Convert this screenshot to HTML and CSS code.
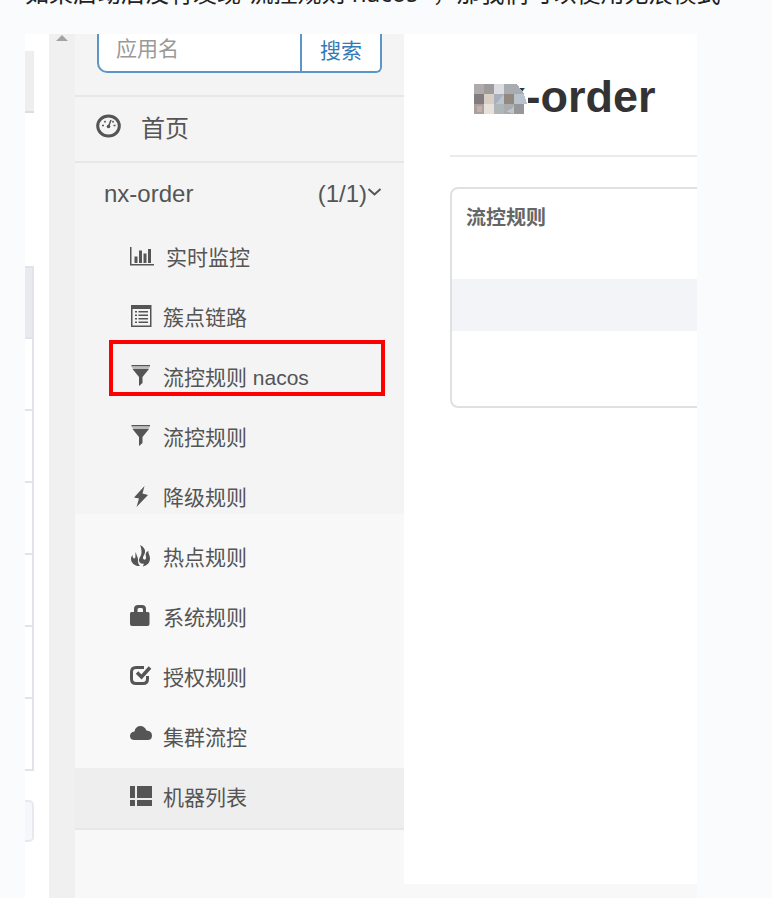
FILE: index.html
```html
<!DOCTYPE html>
<html lang="zh-CN">
<head>
<meta charset="utf-8">
<meta name="viewport" content="width=device-width, initial-scale=1">
<title>nx-order</title>
<link rel="stylesheet" href="styles.css">
</head>
<body>
<article class="article">
  <p class="lead">如果启动后没有发现“流控规则 nacos ”，那我们可以使用无痕模式</p>
  <div class="frame">
    <div class="backdrop" aria-hidden="true">
      <div class="strip-head"></div>
      <div class="strip-table">
        <div class="strip-row strip-row-head"></div>
        <div class="strip-row"></div>
        <div class="strip-row"></div>
        <div class="strip-row"></div>
        <div class="strip-row"></div>
        <div class="strip-row"></div>
        <div class="strip-row"></div>
      </div>
      <div class="strip-button"></div>
    </div>
    <div class="scrollbar" aria-hidden="true">
      <svg width="12" height="6" viewBox="0 0 12 6"><path d="M0 6 6 0l6 6z" fill="#a3a3a3"/></svg>
    </div>
    <nav class="sidebar">
      <div class="sidebar-top">
        <form class="search">
          <input class="search-input" type="text" placeholder="应用名" aria-label="应用名">
          <button class="search-button" type="button">搜索</button>
        </form>
        <a class="home" href="#">
          <svg width="26" height="24" viewBox="0 0 26 24" fill="none" stroke="#555"><ellipse cx="12.500" cy="12" rx="10.800" ry="10" stroke-width="3"/><path d="M12.500 12.500l2.500-6.500" stroke-width="1.500"/><circle cx="12.500" cy="12.500" r="1.800" fill="#555" stroke="none"/><path d="M6 11.500h2M17.500 11.500h2M8.500 7l1 1.500M17.500 7l-1 1.500" stroke-width="1.500"/></svg>
          <span>首页</span>
        </a>
        <a class="app" href="#">
          <span>nx-order</span>
          <span class="app-count">(1/1)<svg width="15" height="10" viewBox="0 0 15 10" fill="none" stroke="#555" stroke-width="2"><path d="M1.500 1l6 5.500 6-5.500"/></svg></span>
        </a>
      </div>
      <ul class="menu">
        <li><a class="item" href="#"><svg width="25" height="22" viewBox="0 0 25 22" fill="#555"><path d="M0 2h1.500v17H24v1.500H0zM4.500 11.500h3V18h-3zM9 5.500h3V18H9zM13.500 8.500h3V18h-3zM18 4h3v14h-3z"/></svg>实时监控</a></li>
        <li><a class="item" href="#"><svg width="22" height="22" viewBox="0 0 22 22" fill="#555"><path fill-rule="evenodd" d="M1 0h20.500v22H1zM2.500 4v16.500H20V4z"/><path d="M5 6h2v1.500H5zM8.500 6H18v1.500H8.500zM5 9.500h2V11H5zM8.500 9.500H18V11H8.500zM5 13h2v1.500H5zM8.500 13H18v1.500H8.500zM5 16.500h2V18H5zM8.500 16.500H18V18H8.500z"/></svg>簇点链路</a></li>
        <li><a class="item item-marked" href="#"><svg width="22" height="22" viewBox="0 0 22 22" fill="#555"><path d="M1.500 0H20v1.500H1.500z"/><path d="M1.500 1.500H20L18.500 4H3z" fill="#bbb"/><path d="M2.500 4H19l-6.500 8v6L9 21v-9z"/></svg>流控规则 nacos</a></li>
        <li><a class="item" href="#"><svg width="22" height="22" viewBox="0 0 22 22" fill="#555"><path d="M1.500 0H20v1.500H1.500z"/><path d="M1.500 1.500H20L18.500 4H3z" fill="#bbb"/><path d="M2.500 4H19l-6.500 8v6L9 21v-9z"/></svg>流控规则</a></li>
        <li><a class="item" href="#"><svg width="22" height="22" viewBox="0 0 22 22" fill="#555"><path d="M14.500 1 4 12.500l5 1L6.500 22 18 10l-5.500-1.500z"/></svg>降级规则</a></li>
        <li><a class="item" href="#"><svg width="22" height="22" viewBox="0 0 22 22" fill="#555"><path d="M10 0c4 2 5.500 4.500 5 7.500-.5 2.500-2.500 4-2 6 .5 1.500 2.500 1.500 3 0 .5-2-1-3.500 0-5.500.5-1 1.500-2 2.500-2-.5 2.500 1.500 4 1.500 7.500 0 4-2.500 7-7.500 8 1-1 1.500-2 1-3-2 .5-4-.5-4.500-2.500-.5-3 2.500-5 2.500-8.500C11.500 4.500 11 2 10 0zM6 7c-.5 2 2 4.500 2 7.500 0 2.500 0 4.500 2 6.500C5 21.500 1 18 1 14c0-1.500.5-3 1.500-4C2.500 12 3 13.500 4.500 13.500 6.500 12.500 4.500 9.500 6 7z"/></svg>热点规则</a></li>
        <li><a class="item" href="#"><svg width="22" height="22" viewBox="0 0 22 22" fill="#555"><path fill-rule="evenodd" d="M4 7V4q0-4 4-4h4q4 0 4 4v3h2q1.500 0 1.500 1.500V19q0 2-2 2H2q-2 0-2-2V8.500Q0 7 1.500 7zM7.500 7H13V5q0-2-1.500-2H9Q7.500 3 7.500 5z"/></svg>系统规则</a></li>
        <li><a class="item" href="#"><svg width="22" height="22" viewBox="0 0 22 22" fill="none" stroke="#555"><path d="M14 2.500H6Q1.500 2.500 1.500 7v7q0 4.500 4.500 4.500h7q4.500 0 4.500-4.500v-3" stroke-width="3"/><path d="M7 7.500l4.500 4.500L20 2.500" stroke-width="3.500"/></svg>授权规则</a></li>
        <li><a class="item" href="#"><svg width="22" height="22" viewBox="0 0 22 22" fill="#555"><path d="M4.500 15Q0 15 0 11t4.500-4.500Q5.500 1 10.500 1q4 0 6 4.500Q22 6 22 10.500q0 4.500-4.500 4.500z"/></svg>集群流控</a></li>
        <li><a class="item item-active" href="#"><svg width="22" height="22" viewBox="0 0 22 22" fill="#555"><path d="M0 1h5v12H0zM7 1h15v12H7zM0 15h5v6H0zM7 15h15v6H7z"/></svg>机器列表</a></li>
      </ul>
    </nav>
    <main class="content">
      <header class="content-head">
        <h1 class="title">nx-order<svg class="mosaic" width="54" height="30" viewBox="0 0 54 30" shape-rendering="crispEdges" aria-hidden="true"><path fill="#fff" d="M50 8h4v22h-4z"/><path fill="#b0aaaa" d="M0 0h10v10H0z"/><path fill="#9d9b9b" d="M10 0h10v10H10z"/><path fill="#dcdde0" d="M20 0h10v10H20z"/><path fill="#a8abaf" d="M30 0h13l7 10H30z"/><path fill="#827c81" d="M0 10h10v10H0z"/><path fill="#d8cec3" d="M10 10h10v10H10z"/><path fill="#a7b0bc" d="M20 10h10v10H20z"/><path fill="#bac5cf" d="M30 20V10l-8 10z"/><path fill="#93897f" d="M30 10h10v10H30z"/><path fill="#b8c3ce" d="M40 10h10l3 10H40z"/><path fill="#aca09d" d="M0 20h10v10H0z"/><path fill="#c2b0ac" d="M3 22h5v6H3z"/><path fill="#e8e0da" d="M10 20h10v10H10z"/><path fill="#b0b5b8" d="M20 20h10v10H20z"/><path fill="#a9adb0" d="M30 20h10v10H30z"/><path fill="#c0c5ca" d="M40 20q-1 6-8 7l8 3z"/><path fill="#959799" d="M40 20h10v10H40z"/></svg></h1>
      </header>
      <section class="panel">
        <h2 class="panel-title">流控规则</h2>
        <div class="panel-band"></div>
      </section>
    </main>
  </div>
</article>
</body>
</html>
```
FILE: styles.css
```css
* {
  box-sizing: border-box;
}

body {
  margin: 0;
  background: #fafbfd;
  color: #555;
  font-family: "Liberation Sans", "Noto Sans CJK SC", sans-serif;
}

a {
  color: inherit;
  text-decoration: none;
}

svg {
  display: block;
  flex: none;
}

.article {
  display: flex;
  flex-direction: column;
  height: 100vh;
  padding: 0 75px 0 25px;
  overflow: hidden;
}

.lead {
  flex: none;
  height: 34px;
  margin: 0;
  display: flex;
  align-items: flex-end;
  padding-bottom: 23px;
  margin-right: -75px;
  color: #222;
  font-family: "Noto Sans", "Noto Sans CJK SC", sans-serif;
  font-size: 24px;
  line-height: 36px;
  white-space: nowrap;
}

.frame {
  flex: 1;
  min-height: 0;
  display: flex;
  background: #f8f8f8;
  overflow: hidden;
}

/* Strip of the window behind */
.backdrop {
  flex: none;
  width: 24px;
  padding: 17px 15px 0 0;
  background: #fff;
}

.strip-head {
  height: 62px;
  background: #eee;
  border-bottom: 2px solid #ddd;
}

.strip-table {
  margin-top: 153px;
  border: solid #e2e2ea;
  border-width: 2px 2px 0 0;
}

.strip-row {
  height: 72px;
  border-bottom: 2px solid #e2e2ea;
}

.strip-row-head {
  height: 71px;
  background: #e9eaef;
}

.strip-button {
  height: 42px;
  margin-top: 29px;
  background: #f6f7fa;
  border: 2px solid #e8e9ee;
  border-left: 0;
  border-radius: 0 5px 5px 0;
}

.scrollbar {
  flex: none;
  width: 26px;
  padding: 1px 7px;
  background: #f0f0f0;
}

/* Sidebar */
.sidebar {
  flex: none;
  width: 329px;
  background: linear-gradient(#f4f4f4 480px, #f8f8f8 480px);
}

.search {
  display: flex;
  height: 63px;
  padding: 0 22px 22px;
  border-bottom: 2px solid #e7e7e7;
}

.search-input,
.search-button {
  margin: 0;
  border: 2px solid #5c95c8;
  border-top: 0;
  background: #fff;
  font: inherit;
  font-size: 21px;
  line-height: 30px;
}

.search-input {
  flex: 1;
  min-width: 0;
  padding: 0 17px 8px;
  border-right: 0;
  border-radius: 0 0 0 10px;
}

.search-input::placeholder {
  color: #999;
}

.search-button {
  width: 82px;
  padding: 0 0 4px;
  border-radius: 0 0 6px 0;
  color: #337ab7;
}

.home {
  display: flex;
  align-items: center;
  gap: 19px;
  height: 66px;
  padding: 0 21px 6px;
  border-bottom: 2px solid #e7e7e7;
  font-size: 24px;
}

.app {
  display: flex;
  align-items: center;
  justify-content: space-between;
  height: 65px;
  padding: 0 22px 4px 29px;
  font-size: 24px;
}

.app-count {
  display: flex;
}

.app-count svg {
  margin-top: 8px;
}

.menu {
  margin: 0;
  padding: 0;
  list-style: none;
}

.item {
  position: relative;
  display: flex;
  align-items: center;
  gap: 11px;
  height: 60px;
  padding: 0 0 4px 55px;
  font-size: 21px;
}

.item-marked::after {
  content: "";
  position: absolute;
  inset: -8px 19px 12px 34px;
  border: 4px solid #f00;
}

.item-active {
  height: 62px;
  background: #eee;
  border-bottom: 2px solid #e7e7e7;
}

/* Main area */
.content {
  flex: 1;
  min-width: 0;
  margin-bottom: 14px;
  padding-left: 46px;
  background: #fff;
  overflow: hidden;
}

.content-head {
  height: 123px;
  padding: 37px 0 0 23px;
  border-bottom: 2px solid #eaeaea;
}

.title {
  position: relative;
  margin: 0;
  color: #333;
  font-size: 45px;
  line-height: 52px;
}

.mosaic {
  position: absolute;
  left: 1px;
  top: 13px;
}

.panel {
  height: 221px;
  margin: 30px -10px 0 0;
  border: 2px solid #e0e0e0;
  border-radius: 8px;
}

.panel-title {
  height: 90px;
  margin: 0;
  padding: 14px;
  color: #666;
  font-size: 20px;
  line-height: 30px;
}

.panel-band {
  height: 52px;
  background: #f2f4f7;
}
```
